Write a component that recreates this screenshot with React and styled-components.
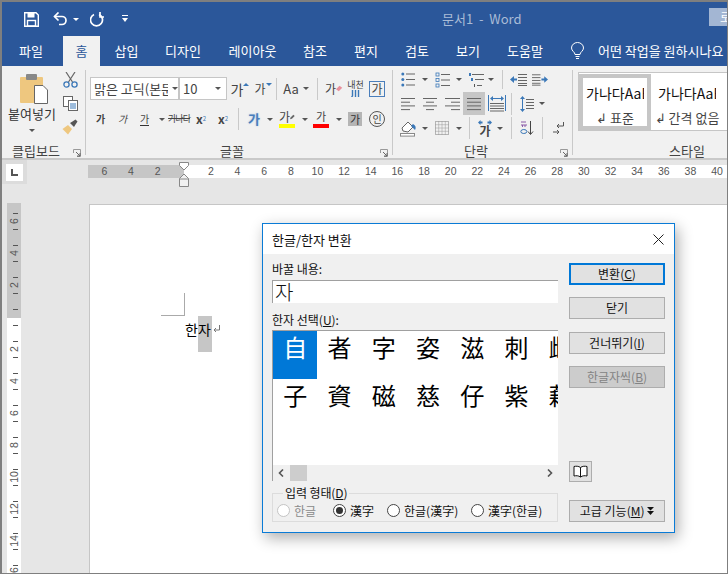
import React from 'react';
import styled, { createGlobalStyle } from 'styled-components';

const Global = createGlobalStyle`
  html, body { margin: 0; padding: 0; background: #fff; }
  body { font-family: "Noto Sans CJK KR", "Noto Sans", sans-serif; font-size: 12px; }
  #root { width: 728px; height: 574px; overflow: hidden; }
`;

const Win = styled.div`
  position: relative; box-sizing: border-box; width: 728px; height: 574px; overflow: hidden;
  display: flex; flex-direction: column;
  border: solid #7f7f7f; border-width: 2px 1px 1px 2px;
`;
const TitleBar = styled.div`
  display: flex; align-items: center; height: 34px; flex: none; background: #2b579a; color: #fff;
`;
const Title = styled.div`color: #a9bbd6; font-size: 13px; margin-left: 314px; width: 267px; white-space: pre; line-height: 34px;`;
const SignIn = styled.div`
  align-self: flex-start; margin-top: 6px; flex: 1; height: 18px; background: #a3b6d3; color: #fff;
  line-height: 18px; padding-left: 11px; overflow: hidden; white-space: nowrap;
`;
const Slot = styled.span`
  flex: none; display: flex; align-items: center; justify-content: center; white-space: nowrap;
  margin-left: ${p => p.$l || 0}px; width: ${p => p.$w}px; color: #444; line-height: 16px;
  font-size: ${p => p.$fs || 11}px; font-weight: ${p => p.$fw || 400};
  font-style: ${p => p.$it ? 'italic' : 'normal'};
`;
const Caret = styled.span`
  flex: none; width: 0; height: 0; margin-left: ${p => p.$l || 0}px;
  border-left: 3px solid transparent; border-right: 3px solid transparent;
  border-top: 3px solid ${p => p.$c || '#555'};
`;
const UpCaret = styled.span`
  flex: none; width: 0; height: 0; align-self: flex-start; margin-top: 2px;
  border-left: 3px solid transparent; border-right: 3px solid transparent;
  border-bottom: 3px solid #3b78b8;
`;
const DownCaret = styled(UpCaret)`
  border-bottom: 0; border-top: 3px solid #3b78b8;
`;
const Tabs = styled.div`display: flex; height: 30px; flex: none; background: #2b579a;`;
const Tab = styled.div`
  flex: none; display: flex; align-items: center; justify-content: center; line-height: 30px;
  margin-left: ${p => p.$l}px; width: ${p => p.$w}px; white-space: nowrap; font-size: 13px;
  color: ${p => p.$on ? '#2b579a' : '#fff'}; background: ${p => p.$on ? '#f1f1f1' : 'transparent'};
`;
const Ask = styled.div`margin-left: 13px; color: #fff; line-height: 30px; white-space: nowrap; font-size: 13px;`;
const Ribbon = styled.div`
  display: flex; flex: none; height: 94px; box-sizing: border-box; background: #f1f1f1;
  border-bottom: 2px solid #c9c9c9; padding-top: 4px;
`;
const Group = styled.div`
  flex: none; display: flex; flex-direction: column; height: 85px; box-sizing: border-box;
  width: ${p => p.$w ? p.$w + 'px' : 'auto'}; flex-grow: ${p => p.$w ? 0 : 1};
  border-right: ${p => p.$w ? '1px solid #c9c9c9' : '0'};
`;
const GroupBody = styled.div`flex: 1; min-height: 0; display: flex; flex-direction: column;`;
const GroupFoot = styled.div`
  display: grid; grid-template-columns: ${p => p.$lx}px auto 1fr; align-items: center; height: 19px; color: #444;
  line-height: 19px; font-size: 13px; margin-bottom: -5px; flex: none;
`;
const Launch = styled.svg`justify-self: end; margin: 4px 4px 0 0;`;
const Row = styled.div`
  display: flex; align-items: center; flex: none; height: ${p => p.$h}px; margin-top: ${p => p.$t || 0}px;
`;
const VSep = styled.span`
  flex: none; width: 1px; height: ${p => p.$h || 22}px; background: #c9c9c9; margin-left: ${p => p.$l}px;
`;
const FontBox = styled.div`
  flex: none; display: flex; box-sizing: border-box; margin-left: 4px; width: 137px; height: 23px;
  background: #fff; border: 1px solid #c6c6c6; color: #444; line-height: 21px; font-size: 13px;
`;
const FontName = styled.div`
  flex: none; width: 89px; display: flex; align-items: center; box-sizing: border-box; padding-left: 3px;
  border-right: 2px solid #c6c6c6;
`;
const Clip = styled.span`display: block; overflow: hidden; white-space: nowrap; width: ${p => p.$w}px;`;
const SizeBox = styled.div`flex: 1; display: flex; align-items: center; padding-left: 3px;`;
const Boxed = styled.span`
  box-sizing: border-box; display: block; width: 16px; height: 16px; border: 1px solid #4a7ebb; text-align: center;
  line-height: 14px; color: #444;
`;
const Shade = styled.span`display: block; width: 14px; height: 14px; background: #b5b5b5; text-align: center; line-height: 14px; color: #333;`;
const Ring = styled.span`
  box-sizing: border-box; display: block; width: 16px; height: 16px; border: 1px solid #555; border-radius: 50%;
  text-align: center; line-height: 14px; font-size: 10px; color: #444;
`;
const Stack = styled.span`display: flex; flex-direction: column; align-items: center; width: 100%; line-height: ${p => p.$lh || 13}px;`;
const Bar = styled.span`display: block; width: 100%; height: 4px; background: ${p => p.$c}; margin-top: 1px;`;
const Mark = styled.span`display: flex; align-items: center; justify-content: flex-start; width: 100%; font-size: 12px; line-height: 13px;`;
const Under = styled.span`border-bottom: 1px solid #333; line-height: 13px;`;
const Strike = styled.span`text-decoration: line-through; letter-spacing: -1px; font-size: 9px;`;
const Selected = styled.span`
  flex: none; display: flex; align-items: center; justify-content: center; width: 22px; height: 23px;
  margin-left: 3px; background: #c6c6c6;
`;
const BlueGa = styled.span`color: #4a7ebb; text-shadow: 0 0 2px #a8c4e4;`;
const Sub = styled.sub`font-size: 6px; color: #3b78b8; line-height: 0; vertical-align: -2px; font-weight: 400;`;
const Sup = styled.sup`font-size: 6px; color: #3b78b8; line-height: 0; vertical-align: 5px; font-weight: 400;`;
const Clipboard = styled.div`display: flex; flex: 1;`;
const PasteCol = styled.div`
  flex: none; width: 60px; display: flex; flex-direction: column; align-items: center; padding-top: 4px; color: #333;
  svg { margin-left: 3px; }
`;
const PasteLabel = styled.div`line-height: 16px; margin-top: 2px; font-size: 13px;`;
const PasteCaret = styled(Caret)`margin-top: 7px;`;
const SmallTools = styled.div`
  display: flex; flex-direction: column; align-items: center; width: 16px; gap: 8px; padding-top: 2px;
`;
const Gallery = styled.div`
  display: flex; margin: 2px 0 0 5px; height: 59px; box-sizing: border-box; background: #fff;
  border: 1px solid #c6c6c6; border-right: 0; overflow: hidden; padding-top: 1px;
`;
const StyleItem = styled.div`
  flex: none; box-sizing: border-box; width: ${p => p.$w}px; height: 56px; display: flex; flex-direction: column;
  align-items: center; border: 4px solid ${p => p.$on ? '#c6c6c6' : 'transparent'};
`;
const StyleSample = styled.div`
  width: 58px; overflow: hidden; white-space: nowrap; font-size: 14px; line-height: 20px; color: #111; margin-top: 5px;
`;
const StyleName = styled.div`margin-top: 7px; color: #444; line-height: 16px; white-space: nowrap; font-size: 13px;`;
const Work = styled.div`flex: 1; min-height: 0; background: #e6e6e6; display: flex; flex-direction: column;`;
const RulerRow = styled.div`display: flex; flex: none; height: 43px;`;
const TabSel = styled.div`
  flex: none; width: 25px; height: 24px; background: #dcdcdc; display: flex; align-items: center; justify-content: center;
`;
const TabInner = styled.div`width: 17px; height: 17px; background: #fff; display: flex; align-items: center; justify-content: center;`;
const HRuler = styled.div`
  position: relative; flex: 1; margin: 5px 0 0 61px; height: 13px;
  background: linear-gradient(90deg, #c6c6c6 96px, #fff 96px);
  display: flex; padding-left: 3px; overflow: visible;
`;
const HNum = styled.span`flex: none; width: 26.65px; text-align: center; font-size: 10.5px; line-height: 13px; color: #555; font-family: "Liberation Sans", sans-serif;`;
const Marker = styled.svg`position: absolute; left: 91px; top: -3px;`;
const DocRow = styled.div`flex: 1; min-height: 0; display: flex;`;
const VRuler = styled.div`
  flex: none; width: 14px; margin-left: 5px; margin-top: 0; padding-top: 2px;
  background: linear-gradient(#c6c6c6 115px, #fff 115px); overflow: hidden;
`;
const VCell = styled.div`
  position: relative; height: 32px; display: flex; align-items: center; justify-content: center;
  &::before, &::after { content: ""; position: absolute; left: 6px; width: 5px; height: 1px; background: #555; }
  &::before { top: 8px; } &::after { top: 24px; }
`;
const VNum = styled.span`
  display: block; transform: rotate(-90deg); font-size: 10.5px; line-height: 10px; color: #555;
  font-family: "Liberation Sans", sans-serif;
`;
const Page = styled.div`
  flex: 1; margin: 1px 0 0 68px; background: #fff; border: solid #c6c6c6; border-width: 1px 0 0 1px;
`;
const Crop = styled.div`
  width: 23px; height: 22px; margin: 88px 0 0 71px; border: solid #aaa; border-width: 0 1px 1px 0;
`;
const DocLine = styled.div`display: flex; align-items: flex-start; margin-left: 95px; font-size: 14px; line-height: 26px; color: #000;`;
const Hilite = styled.span`background: #c6c6c6; height: 36px; width: 14px; display: block;`;
const RetMark = styled.svg`margin: 9px 0 0 1px;`;
const Dialog = styled.div`
  position: absolute; left: 260px; top: 221px; width: 413px; height: 310px; box-sizing: border-box;
  border: 1px solid #0a7bd6; background: #f0f0f0; box-shadow: 3px 5px 14px rgba(0,0,0,.32);
  display: flex; flex-direction: column; color: #111;
`;
const DlgTitle = styled.div`
  height: 30px; flex: none; background: #fff; display: flex; align-items: center; justify-content: space-between;
  padding: 0 10px 0 9px; font-size: 13px;
`;
const DlgBody = styled.div`flex: 1; display: flex;`;
const LeftCol = styled.div`margin-left: 9px; width: 286px; flex: none; padding-top: 7px;`;
const RightCol = styled.div`margin-left: 11px; width: 96px; flex: none; padding-top: 9px; display: flex; flex-direction: column;`;
const Lbl = styled.div`line-height: 16px; height: 16px; margin: ${p => p.$t || 0}px 0 ${p => p.$b || 3}px;`;
const Input = styled.div`
  box-sizing: border-box; height: 23px; background: #fff; border: solid #a0a0a0; border-width: 1px 0 0 1px;
  font-size: 20px; font-weight: 300; line-height: 22px; padding-left: 2px;
`;
const List = styled.div`
  box-sizing: border-box; height: 151px; background: #fff; border: solid #a0a0a0; border-width: 1px 0 0 1px;
  display: flex; flex-direction: column; overflow: hidden;
`;
const Chars = styled.div`
  flex: 1; display: grid; grid-template-columns: repeat(7, 44.25px); grid-auto-rows: 48px; overflow: hidden;
`;
const Ch = styled.div`
  font-size: 24px; line-height: 32px; text-align: center; overflow: hidden;
  color: ${p => p.$on ? '#fff' : '#000'}; background: ${p => p.$on ? '#0078d7' : '#fff'};
`;
const HScroll = styled.div`
  flex: none; height: 16px; background: #f0f0f0; display: flex; align-items: center; margin-bottom: 0;
`;
const Thumb = styled.div`flex: none; width: 17px; height: 16px; margin-left: 1px; background: #cdcdcd;`;
const ScrollTrack = styled.div`flex: 1;`;
const Arrow = styled.svg`flex: none; margin: 0 5px;`;
const Field = styled.fieldset`
  margin: 5px 0 0; padding: 0 0 0 4px; height: 36px; box-sizing: border-box; border: 1px solid #dcdcdc;
  display: grid; grid-template-columns: 56px 54px 84px auto; align-items: center;
`;
const Legend = styled.legend`padding: 0 2px; margin-left: 6px; line-height: 14px; font-size: 12px; height: 14px; letter-spacing: -.1px;`;
const Opt = styled.label`
  display: flex; align-items: center; gap: 4px; white-space: nowrap; line-height: 16px;
  color: ${p => p.$off ? '#8a8a8a' : '#111'};
`;
const Radio = styled.span`
  flex: none; box-sizing: border-box; width: 13px; height: 13px; border-radius: 50%; background: #fff;
  border: 1px solid ${p => p.$off ? '#c4c4c4' : '#444'}; display: flex; align-items: center; justify-content: center;
`;
const Dot = styled.span`display: block; width: 7px; height: 7px; border-radius: 50%; background: #333;`;
const Btn = styled.button`
  flex: none; box-sizing: border-box; padding: 0; width: ${p => p.$w || 96}px; height: ${p => p.$h || 22}px;
  margin-top: ${p => p.$t || 0}px; font-family: inherit; font-size: 12px; line-height: 18px;
  background: ${p => p.$off ? '#cccccc' : '#e1e1e1'}; color: ${p => p.$off ? '#838383' : '#111'};
  border: ${p => p.$main ? '2px solid #0078d7' : '1px solid #adadad'};
  display: flex; align-items: center; justify-content: center;
`;

const Lines = ({ w = 14, rows }) => (
  <svg width={w} height="14" viewBox={`0 0 ${w} 14`}>
    {rows.map(([x, l], i) => <rect key={i} x={x} y={1 + i * 3.7} width={l} height="1" fill="#666" />)}
  </svg>
);
const BulletIcon = () => (
  <svg width="14" height="15" viewBox="0 0 14 15">
    {[2, 7.5, 13].map(y => <React.Fragment key={y}><circle cx="1.8" cy={y} r="1.5" fill="#3b78b8" /><rect x="5" y={y - .5} width="9" height="1" fill="#666" /></React.Fragment>)}
  </svg>
);
const NumIcon = () => (
  <svg width="15" height="16" viewBox="0 0 15 16">
    {[1, 6.5, 12].map((y, i) => <React.Fragment key={y}>
      <rect x="1" y={y} width="3" height="3" fill="none" stroke="#3b78b8" strokeWidth=".8" />
      <rect x="6" y={y + 1} width="9" height="1" fill="#666" /></React.Fragment>)}
  </svg>
);
const MultiIcon = () => (
  <svg width="16" height="16" viewBox="0 0 16 16">
    <rect x="1" y="1" width="2" height="3" fill="#3b78b8" /><rect x="4" y="2" width="12" height="1" fill="#666" />
    <rect x="3" y="6" width="2" height="3" fill="#3b78b8" /><rect x="7" y="7" width="9" height="1" fill="#666" />
    <rect x="6" y="12" width="1" height="3" fill="#555" /><rect x="9" y="13" width="5" height="1" fill="#666" />
  </svg>
);
const IndentIcon = ({ flip }) => (
  <svg width="17" height="13" viewBox="0 0 17 13">
    <g transform={flip ? 'translate(17 0) scale(-1 1)' : ''}>
      {[1, 4, 7, 10, 12].map(y => <rect key={y} x="8" y={y} width="9" height="1" fill="#666" />)}
      <path d="M0 6.5 L4 3 V5.5 H7 V7.5 H4 V10Z" fill="#3b78b8" />
    </g>
  </svg>
);
const DistIcon = () => (
  <svg width="18" height="17" viewBox="0 0 18 17">
    <rect x="0" y="0" width="1" height="16" fill="#3b78b8" /><rect x="17" y="0" width="1" height="16" fill="#3b78b8" />
    <path d="M2 3.5 L5 1 V3 H13 V1 L16 3.5 L13 6 V4 H5 V6Z" fill="#3b78b8" />
    {[8, 10.5, 13, 15.5].map(y => <rect key={y} x="2" y={y} width="14" height="1" fill="#666" />)}
  </svg>
);
const SpacingIcon = () => (
  <svg width="14" height="16" viewBox="0 0 14 16">
    <path d="M2.5 0 L5 3 H3 V13 H5 L2.5 16 L0 13 H2 V3 H0Z" fill="#3b78b8" />
    {[3, 6, 9, 12].map(y => <rect key={y} x="6" y={y} width="8" height="1" fill="#666" />)}
  </svg>
);
const FillIcon = () => (
  <svg width="17" height="17" viewBox="0 0 17 17">
    <path d="M2 8 L8 2 L13 7 L8 12 L3 11Z" fill="#fff" stroke="#666" />
    <path d="M13 4 Q17 6 15 10 Q13 8 11 6Z" fill="#3b78b8" />
    <rect x=".5" y="13.5" width="14" height="2.6" fill="#fff" stroke="#888" />
  </svg>
);
const GridIcon = () => (
  <svg width="14" height="14" viewBox="0 0 14 14">
    <rect x=".5" y=".5" width="13" height="13" fill="none" stroke="#777" strokeDasharray="1 1" />
    <path d="M7 .5V13.5M.5 7H13.5M3.7 .5V13.5M10.3 .5V13.5M.5 3.7H13.5M.5 10.3H13.5" stroke="#999" strokeDasharray="1 1" fill="none" />
  </svg>
);
const DirIcon = () => (
  <svg width="14" height="5" viewBox="0 0 14 5"><path d="M0 2.5 L2.5 0 V1.5 H4.5 V3.5 H2.5 V5Z M14 2.5 L11.5 0 V1.5 H9.5 V3.5 H11.5 V5Z" fill="#3b78b8" /></svg>
);
const SortIcon = () => (
  <svg width="14" height="16" viewBox="0 0 14 16">
    <path d="M10.5 1V14M8 11.5 L10.5 14.5 L13 11.5" stroke="#444" fill="none" />
    <path d="M1 2H6M1 5H7M2.5 5V7M5 5V7" stroke="#8a5aa8" fill="none" />
    <ellipse cx="3.8" cy="11.5" rx="3" ry="2" fill="none" stroke="#3b78b8" />
  </svg>
);
const MarksIcon = () => (
  <svg width="11" height="14" viewBox="0 0 11 14">
    <path d="M10.5 1V5H4M6 3 L4 5 L6 7" stroke="#555" fill="none" />
    <path d="M0 11H6M4 9 L6 11 L4 13" stroke="#555" fill="none" />
  </svg>
);
const Launcher = () => (
  <Launch width="8" height="8" viewBox="0 0 8 8">
    <path d="M.5 4V.5H7.5V7.5H4" fill="none" stroke="#999" />
    <path d="M3 3L7 7M7 4V7H4" fill="none" stroke="#666" />
  </Launch>
);
const Pen = () => (
  <svg width="9" height="10" viewBox="0 0 9 10"><path d="M0 9L1 6L6 1L8.5 3L3.5 8Z" fill="#666" /></svg>
);
const U = ({ children }) => <u>{children}</u>;

const Chev = ({ dir }) => (
  <Arrow width="6" height="8" viewBox="0 0 6 8">
    <path d={dir === 'l' ? 'M5 .5 L1.5 4 L5 7.5' : 'M1 .5 L4.5 4 L1 7.5'} fill="none" stroke="#555" strokeWidth="1.6" />
  </Arrow>
);

const hNums = ['6', '4', '2', '', '2', '4', '6', '8', '10', '12', '14', '16', '18', '20', '22', '24', '26', '28', '30', '32', '34', '36', '38', '40'];
const vNums = ['6', '4', '2', '', '2', '4', '6', '8', '10', '12', '14', '16'];
const hanja = ['自', '者', '字', '姿', '滋', '刺', '雌', '子', '資', '磁', '慈', '仔', '紫', '藉'];

export default function App() {
  return (
    <Win>
      <Global />
      <TitleBar>
        <Slot $l={22} $w={15}>
          <svg width="15" height="15" viewBox="0 0 15 15">
            <path d="M.7.7H12L14.3 3V14.3H.7Z" fill="none" stroke="#fff" strokeWidth="1.4" />
            <rect x="3.5" y="1" width="7" height="4.5" fill="#fff" /><rect x="3.5" y="8.5" width="8" height="5.5" fill="none" stroke="#fff" strokeWidth="1.4" />
          </svg>
        </Slot>
        <Slot $l={14} $w={15}>
          <svg width="15" height="14" viewBox="0 0 15 14">
            <path d="M1.5 4.5H9A4 4 0 0 1 9 12.5H6" fill="none" stroke="#fff" strokeWidth="1.7" />
            <path d="M5.5 .5L1.5 4.5L5.5 8.5" fill="none" stroke="#fff" strokeWidth="1.7" />
          </svg>
        </Slot>
        <Caret $l={5} $c="#fff" />
        <Slot $l={11} $w={14}>
          <svg width="14" height="15" viewBox="0 0 14 15">
            <path d="M9 2.4A6 6 0 1 1 4 2.4" fill="none" stroke="#fff" strokeWidth="1.7" />
            <path d="M3.5 0V5.5H9" fill="none" stroke="#fff" strokeWidth="1.7" transform="translate(6.5 -.5)" />
          </svg>
        </Slot>
        <Slot $l={18} $w={6}>
          <svg width="6" height="8" viewBox="0 0 6 8"><rect y="0" width="6" height="1" fill="#fff" /><path d="M0 3H6L3 7Z" fill="#fff" /></svg>
        </Slot>
        <Title>문서1  -  Word</Title>
        <SignIn>로그인</SignIn>
      </TitleBar>
      <Tabs>
        <Tab $l={17} $w={24}>파일</Tab>
        <Tab $l={20} $w={37} $on>홈</Tab>
        <Tab $l={15} $w={23}>삽입</Tab>
        <Tab $l={28} $w={34}>디자인</Tab>
        <Tab $l={29} $w={47}>레이아웃</Tab>
        <Tab $l={27} $w={24}>참조</Tab>
        <Tab $l={27} $w={24}>편지</Tab>
        <Tab $l={27} $w={24}>검토</Tab>
        <Tab $l={27} $w={24}>보기</Tab>
        <Tab $l={27} $w={36}>도움말</Tab>
        <Slot $l={27} $w={15}>
          <svg width="15" height="18" viewBox="0 0 15 18">
            <path d="M5 12.5C5 10 1.5 9 1.5 6A6 5.5 0 0 1 13.5 6C13.5 9 10 10 10 12.5Z" fill="none" stroke="#fff" />
            <path d="M5.5 14.5H9.5M6 16.5H9" stroke="#fff" />
          </svg>
        </Slot>
        <Ask>어떤 작업을 원하시나요</Ask>
      </Tabs>
      <Ribbon>
        <Group $w={84}>
          <GroupBody>
            <Clipboard>
              <PasteCol>
                <svg width="28" height="30" viewBox="0 0 28 30">
                  <rect x="0" y="3" width="23" height="26" rx="1" fill="#eec77f" />
                  <rect x="6" y="0" width="11" height="6" rx="1" fill="#888" />
                  <path d="M14.5 11.5H23L27.5 16V29.5H14.5Z" fill="#fff" stroke="#666" />
                </svg>
                <PasteLabel>붙여넣기</PasteLabel>
                <PasteCaret />
              </PasteCol>
              <SmallTools>
                <svg width="15" height="16" viewBox="0 0 15 16">
                  <path d="M3 0L9.5 10M12 0L5.5 10" stroke="#666" fill="none" strokeWidth="1.2" />
                  <circle cx="3.5" cy="12.5" r="2.6" fill="none" stroke="#3b78b8" strokeWidth="1.3" />
                  <circle cx="11.5" cy="12.5" r="2.6" fill="none" stroke="#3b78b8" strokeWidth="1.3" />
                </svg>
                <svg width="15" height="15" viewBox="0 0 15 15">
                  <rect x=".5" y=".5" width="9" height="10" fill="#fff" stroke="#666" />
                  <rect x="5.5" y="4.5" width="9" height="10" fill="#fff" stroke="#666" />
                  <path d="M7 8H13M7 10H13M7 12H13" stroke="#3b78b8" />
                </svg>
                <svg width="16" height="16" viewBox="0 0 16 16">
                  <path d="M6 6L10 10L6 15.5L.5 10Z" fill="#eec77f" />
                  <path d="M8 4L10.5 2.5L13.5 .5L15.5 2.5L13.5 5.5L12 8Z" fill="#555" />
                </svg>
              </SmallTools>
            </Clipboard>
          </GroupBody>
          <GroupFoot $lx={10}><span /><span>클립보드</span><Launcher /></GroupFoot>
        </Group>
        <Group $w={307}>
          <GroupBody>
            <Row $h={23} $t={7}>
              <FontBox>
                <FontName><Clip $w={74}>맑은 고딕(본문 한글)</Clip><Caret $l={4} /></FontName>
                <SizeBox><Clip $w={32}>10</Clip><Caret /></SizeBox>
              </FontBox>
              <Slot $l={5} $w={16} $fs={14}>가<UpCaret /></Slot>
              <Slot $l={7} $w={16} $fs={12}>가<DownCaret /></Slot>
              <VSep $l={5} />
              <Slot $l={6} $w={16} $fs={13}>Aa</Slot>
              <Caret $l={4} />
              <VSep $l={8} />
              <Slot $l={7} $w={18} $fs={12}>
                <Mark>가
                  <svg width="11" height="11" viewBox="0 0 10 10"><path d="M0 6L5 1L9 4L4 9Z" fill="#e8909c" /></svg>
                </Mark>
              </Slot>
              <Slot $l={4} $w={17} $fs={9}>
                <Stack $lh={10}>내천
                  <svg width="9" height="7" viewBox="0 0 9 7"><path d="M1.5 0V6L.5 7M4.5 0V7M7.5 0V7" stroke="#3b78b8" strokeWidth="1.4" fill="none" /></svg>
                </Stack>
              </Slot>
              <Slot $l={5} $w={16} $fs={12}><Boxed>가</Boxed></Slot>
            </Row>
            <Row $h={22} $t={8}>
              <Slot $l={10} $w={9} $fw={700} $fs={10}>가</Slot>
              <Slot $l={13} $w={9} $it $fs={10}>가</Slot>
              <Slot $l={12} $w={11} $fs={10}><Under>가</Under></Slot>
              <Caret $l={9} />
              <Slot $l={6} $w={16}><Strike>가나다</Strike></Slot>
              <Slot $l={8} $w={12} $fw={700} $fs={12}>x<Sub>2</Sub></Slot>
              <Slot $l={10} $w={12} $fw={700} $fs={12}>x<Sup>2</Sup></Slot>
              <VSep $l={9} />
              <Slot $l={8} $w={14} $fs={13} $fw={700}><BlueGa>가</BlueGa></Slot>
              <Caret $l={6} />
              <Slot $l={6} $w={16}><Stack><Mark>가<Pen /></Mark><Bar $c="#ffff00" /></Stack></Slot>
              <Caret $l={7} />
              <Slot $l={5} $w={16}><Stack><span>가</span><Bar $c="#ff0000" /></Stack></Slot>
              <Caret $l={7} />
              <Slot $l={6} $w={14} $fs={11}><Shade>가</Shade></Slot>
              <Slot $l={7} $w={16}><Ring>인</Ring></Slot>
            </Row>
          </GroupBody>
          <GroupFoot $lx={134}><span /><span>글꼴</span><Launcher /></GroupFoot>
        </Group>
        <Group $w={180}>
          <GroupBody>
            <Row $h={19}>
              <Slot $l={8} $w={14}><BulletIcon /></Slot><Caret $l={7} />
              <Slot $l={7} $w={15}><NumIcon /></Slot><Caret $l={6} />
              <Slot $l={6} $w={16}><MultiIcon /></Slot><Caret $l={4} />
              <VSep $l={8} $h={19} />
              <Slot $l={7} $w={17}><IndentIcon /></Slot>
              <Slot $l={5} $w={16}><IndentIcon flip /></Slot>
            </Row>
            <Row $h={23} $t={3}>
              <Slot $l={8} $w={14}><Lines rows={[[0, 14], [0, 9], [0, 14], [0, 9]]} /></Slot>
              <Slot $l={8} $w={14}><Lines rows={[[0, 14], [3, 8], [0, 14], [3, 8]]} /></Slot>
              <Slot $l={8} $w={15}><Lines w={15} rows={[[0, 15], [6, 9], [0, 15], [6, 9]]} /></Slot>
              <Selected><Lines rows={[[0, 14], [0, 14], [0, 14], [0, 14]]} /></Selected>
              <Slot $l={3} $w={18}><DistIcon /></Slot>
              <VSep $l={5} />
              <Slot $l={8} $w={14}><SpacingIcon /></Slot><Caret $l={5} />
            </Row>
            <Row $h={20} $t={3}>
              <Slot $l={7} $w={17}><FillIcon /></Slot><Caret $l={5} />
              <Slot $l={7} $w={14}><GridIcon /></Slot><Caret $l={7} />
              <VSep $l={7} />
              <Slot $l={7} $w={16} $fs={12} $fw={700}><Stack $lh={12}><DirIcon /><span>가</span></Stack></Slot><Caret $l={4} />
              <VSep $l={8} />
              <Slot $l={8} $w={14}><SortIcon /></Slot>
              <VSep $l={8} />
              <Slot $l={10} $w={11}><MarksIcon /></Slot>
            </Row>
          </GroupBody>
          <GroupFoot $lx={71}><span /><span>단락</span><Launcher /></GroupFoot>
        </Group>
        <Group>
          <GroupBody>
            <Gallery>
              <StyleItem $w={72} $on>
                <StyleSample>가나다AaBbCc</StyleSample>
                <StyleName>↲ 표준</StyleName>
              </StyleItem>
              <StyleItem $w={72}>
                <StyleSample>가나다AaBbCc</StyleSample>
                <StyleName>↲ 간격 없음</StyleName>
              </StyleItem>
            </Gallery>
          </GroupBody>
          <GroupFoot $lx={96}><span /><span>스타일</span><span /></GroupFoot>
        </Group>
      </Ribbon>
      <Work>
        <RulerRow>
          <TabSel>
            <TabInner>
              <svg width="7" height="7" viewBox="0 0 7 7"><path d="M1 0V6H7" fill="none" stroke="#555" strokeWidth="2" /></svg>
            </TabInner>
          </TabSel>
          <HRuler>
            {hNums.map((n, i) => <HNum key={i}>{n}</HNum>)}
            <Marker width="10" height="25" viewBox="0 0 10 25">
              <path d="M.5.5H9.5V3.5L5 8L.5 3.5Z" fill="#fff" stroke="#888" />
              <path d="M5 12L9.5 16.5V24.5H.5V16.5ZM.5 17H9.5" fill="#f1f1f1" stroke="#888" />
            </Marker>
          </HRuler>
        </RulerRow>
        <DocRow>
          <VRuler>
            {vNums.map((n, i) => <VCell key={i}><VNum>{n}</VNum></VCell>)}
          </VRuler>
          <Page>
            <Crop />
            <DocLine>
              <span>한</span>
              <Hilite>자</Hilite>
              <RetMark width="7" height="8" viewBox="0 0 7 8"><path d="M6.5 0V5H1M3 3L1 5L3 7" stroke="#777" fill="none" /></RetMark>
            </DocLine>
          </Page>
        </DocRow>
      </Work>
      <Dialog>
        <DlgTitle>
          <span>한글/한자 변환</span>
          <svg width="11" height="11" viewBox="0 0 11 11"><path d="M.5.5L10.5 10.5M10.5.5L.5 10.5" stroke="#222" fill="none" /></svg>
        </DlgTitle>
        <DlgBody>
          <LeftCol>
            <Lbl>바꿀 내용:</Lbl>
            <Input>자</Input>
            <Lbl $t={9} $b={2}>한자 선택(<U>U</U>):</Lbl>
            <List>
              <Chars>{hanja.map((c, i) => <Ch key={i} $on={i === 0}>{c}</Ch>)}</Chars>
              <HScroll>
                <Chev dir="l" />
                <Thumb />
                <ScrollTrack />
                <Chev dir="r" />
              </HScroll>
            </List>
            <Field>
              <Legend>입력 형태(<U>D</U>)</Legend>
              <Opt $off><Radio $off />한글</Opt>
              <Opt><Radio><Dot /></Radio>漢字</Opt>
              <Opt><Radio />한글(漢字)</Opt>
              <Opt><Radio />漢字(한글)</Opt>
            </Field>
          </LeftCol>
          <RightCol>
            <Btn $main>변환(<U>C</U>)</Btn>
            <Btn $t={12}>닫기</Btn>
            <Btn $t={13}>건너뛰기(<U>I</U>)</Btn>
            <Btn $t={12} $off>한글자씩(<U>B</U>)</Btn>
            <Btn $t={73} $w={23} $h={21}>
              <svg width="15" height="13" viewBox="0 0 15 13">
                <path d="M7.5 2.5C5.5 1 3 1 1 1.5V11C3 10.5 5.5 10.5 7.5 12C9.5 10.5 12 10.5 14 11V1.5C12 1 9.5 1 7.5 2.5ZM7.5 2.5V12" fill="#fff" stroke="#111" />
              </svg>
            </Btn>
            <Btn $t={18}>고급 기능(<U>M</U>)&nbsp;
              <svg width="7" height="8" viewBox="0 0 7 8"><path d="M0 0H7L3.5 3.5ZM0 4H7L3.5 8Z" fill="#111" /></svg>
            </Btn>
          </RightCol>
        </DlgBody>
      </Dialog>
    </Win>
  );
}
